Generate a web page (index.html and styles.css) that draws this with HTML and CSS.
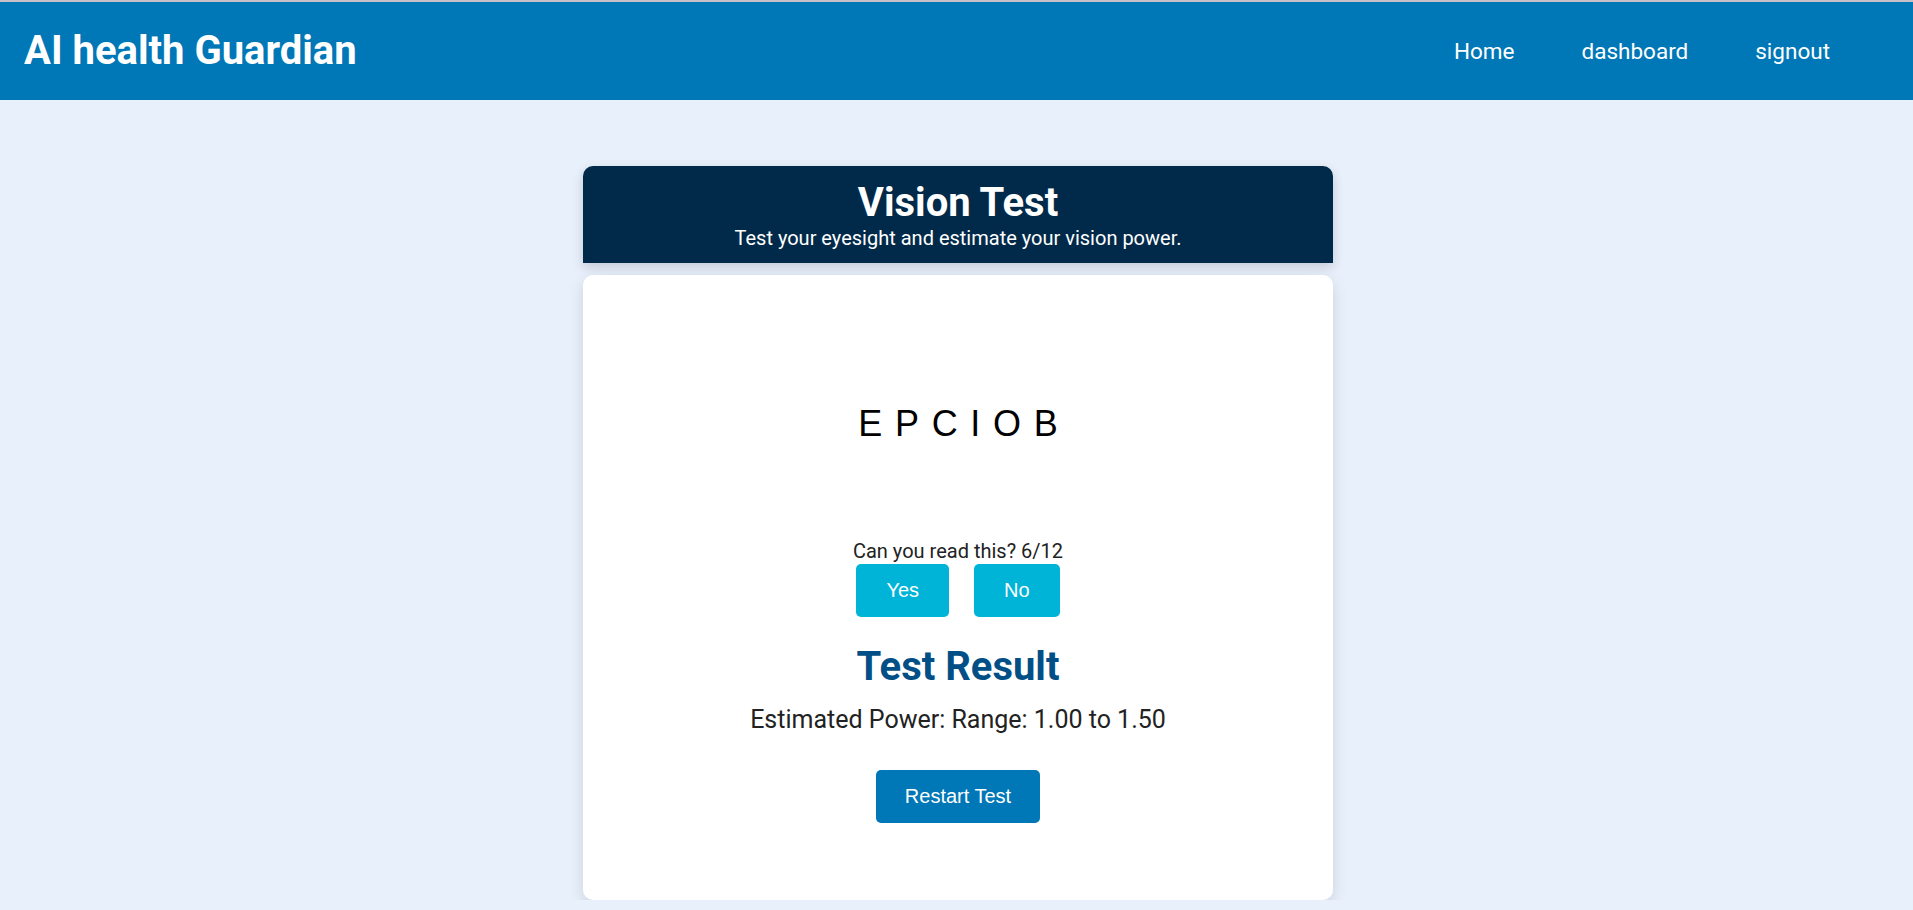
FILE: index.html
```html
<!DOCTYPE html>
<html lang="en">
<head>
<meta charset="utf-8">
<title>AI health Guardian - Vision Test</title>
<link rel="stylesheet" href="styles.css">
</head>
<body>
<header class="topbar">
  <h1 class="brand">AI health Guardian</h1>
  <nav class="nav">
    <a class="nav-link" href="#">Home</a>
    <a class="nav-link" href="#">dashboard</a>
    <a class="nav-link" href="#">signout</a>
  </nav>
</header>
<main class="page">
  <section class="test">
    <div class="test-head">
      <h2 class="test-title">Vision Test</h2>
      <p class="test-sub">Test your eyesight and estimate your vision power.</p>
    </div>
    <div class="test-card">
      <div class="chart"><span class="letters">EPCIOB</span></div>
      <p class="question">Can you read this? 6/12</p>
      <div class="answers">
        <button class="btn btn-answer">Yes</button>
        <button class="btn btn-answer">No</button>
      </div>
      <h3 class="result-title">Test Result</h3>
      <p class="result-value">Estimated Power: Range: 1.00 to 1.50</p>
      <button class="btn btn-restart">Restart Test</button>
    </div>
  </section>
</main>
</body>
</html>
```

FILE: styles.css
```css
* {
  box-sizing: border-box;
}

body {
  margin: 0;
  background: #e8f0fc;
  font-family: Roboto, "Liberation Sans", Arial, sans-serif;
  color: #222;
}

.topbar {
  height: 100px;
  border-top: 2px solid #c9bfc9;
  background: #0077b6;
  display: flex;
  align-items: center;
  justify-content: space-between;
  padding: 0 83px 0 24px;
}

.brand {
  margin: 0;
  font-size: 40px;
  font-weight: 700;
  color: #fff;
  line-height: 1.172;
}

.nav {
  display: flex;
  gap: 67px;
}

.nav-link {
  color: #fff;
  text-decoration: none;
  font-size: 22.5px;
}

.page {
  display: flex;
  justify-content: center;
  padding: 66px 0 0 3px;
}

.test {
  width: 750px;
  display: flex;
  flex-direction: column;
  gap: 12px;
}

.test-head {
  background: #012a4a;
  color: #fff;
  text-align: center;
  border-radius: 10px 10px 0 0;
  padding: 14px 20px 13px;
  box-shadow: 0 4px 12px rgba(0, 0, 0, 0.16);
}

.test-title {
  margin: 0;
  font-size: 40px;
  font-weight: 700;
  line-height: 1.172;
}

.test-sub {
  margin: 0;
  font-size: 20px;
  line-height: 1.172;
}

.test-card {
  background: #fff;
  border-radius: 10px;
  box-shadow: 0 5px 15px rgba(0, 0, 0, 0.12);
  padding: 40px 40px 77px;
  display: flex;
  flex-direction: column;
  align-items: center;
  text-align: center;
}

.chart {
  height: 225px;
  padding-bottom: 8px;
  display: flex;
  align-items: center;
  justify-content: center;
}

.letters {
  font-family: "Liberation Sans", Arial, sans-serif;
  font-size: 36px;
  line-height: 42px;
  letter-spacing: 12.7px;
  padding-left: 12.7px;
  color: #000;
}

.question {
  margin: 0;
  font-size: 20px;
  line-height: 1.172;
  color: #222;
}

.answers {
  display: flex;
  gap: 25px;
}

.btn {
  border: none;
  color: #fff;
  font-family: "Liberation Sans", Arial, sans-serif;
  font-size: 20px;
  line-height: 23px;
  padding: 15px 30px;
  border-radius: 5px;
  cursor: pointer;
}

.btn-answer {
  background: #00b4d8;
}

.result-title {
  margin: 27px 0 0;
  font-size: 40px;
  font-weight: 700;
  line-height: 1.172;
  color: #014f86;
}

.result-value {
  margin: 14px 0 0;
  font-size: 25px;
  line-height: 1.172;
  color: #222;
}

.btn-restart {
  margin-top: 36px;
  background: #0077b6;
  padding: 15px 29px;
}
```
